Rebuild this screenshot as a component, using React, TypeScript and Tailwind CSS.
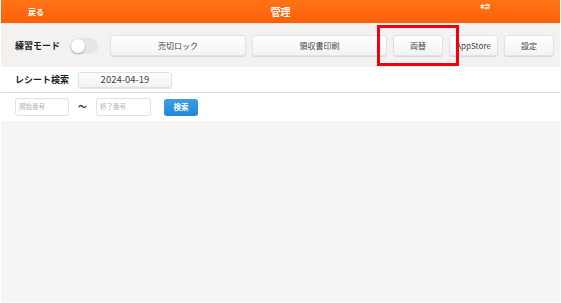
import React from "react";

const font = { fontFamily: '"Noto Sans CJK JP", "Noto Sans", sans-serif' };

function Btn({ w, children }: { w: string; children: React.ReactNode }) {
  return (
    <div
      className={`${w} h-[21px] flex items-center justify-center rounded-[3px] bg-gradient-to-b from-white to-[#f3f3f3] border border-[#e2e2e2] shadow-[0_1px_1px_rgba(0,0,0,0.12)] text-[8px] text-[#444]`}
    >
      {children}
    </div>
  );
}

export default function App() {
  return (
    <div className="w-[561px] h-[303px] bg-[#f6f5f3] relative overflow-hidden border-l border-r border-b border-l-white border-r-[#fbfbfa] border-b-[#fbfbfa]" style={font}>
      {/* header */}
      <div className="h-[24px] bg-gradient-to-b from-[#ff7416] to-[#ff5e08] flex items-center relative border-b border-[#e9e7e4] -mx-px">
        <div className="pl-[28px] text-[8px] font-bold text-white">戻る</div>
        <div className="absolute left-0 right-0 top-0 h-[23px] flex items-center justify-center text-[10px] font-bold text-white">
          管理
        </div>
        <div className="absolute left-[480px] top-[2px] text-[5px] font-bold text-white">本部</div>
      </div>
      {/* toolbar */}
      <div className="h-[43px] bg-[#f3f2f0] flex items-center pl-[14px] pr-[6px]">
        <div className="text-[9px] font-bold text-[#222] w-[56px]">練習モード</div>
        <div className="w-[28px] h-[16px] rounded-full bg-[#e6e6e6] relative mr-[12px]">
          <div className="absolute left-[1px] top-[1px] w-[14px] h-[14px] rounded-full bg-white shadow-[0_1px_2px_rgba(0,0,0,0.3)]" />
        </div>
        <div className="flex gap-[6px]">
          <Btn w="w-[136px]">売切ロック</Btn>
          <Btn w="w-[135px]">領収書印刷</Btn>
          <Btn w="w-[50px]">両替</Btn>
          <Btn w="w-[49px]">AppStore</Btn>
          <Btn w="w-[50px]">設定</Btn>
        </div>
      </div>
      {/* receipt search */}
      <div className="bg-white h-[26px] flex items-center pl-[14px] border-b border-[#dcdcdc]">
        <div className="text-[9px] font-bold text-[#222] w-[63px]">レシート検索</div>
        <div className="w-[94px] h-[16px] flex items-center justify-center rounded-[3px] bg-gradient-to-b from-white to-[#f2f2f2] border border-[#e0e0e0] shadow-[0_1px_1px_rgba(0,0,0,0.12)] text-[9.5px] text-[#444]">
          2024-04-19
        </div>
      </div>
      <div className="bg-white h-[28px] flex items-center pl-[14px]">
        <div className="w-[54px] h-[18px] rounded-[3px] border border-[#e2e2e2] bg-white flex items-center pl-[3px] text-[6.5px] text-[#b5b5b5]">
          開始番号
        </div>
        <div className="w-[27px] text-center text-[9px] text-[#333] font-bold">〜</div>
        <div className="w-[55px] h-[18px] rounded-[3px] border border-[#e2e2e2] bg-white flex items-center pl-[3px] text-[6.5px] text-[#b5b5b5]">
          終了番号
        </div>
        <div className="ml-[13px] w-[34px] h-[17px] rounded-[3px] bg-gradient-to-b from-[#3a9fe6] to-[#2486d6] flex items-center justify-center text-[7.5px] font-bold text-white">
          検索
        </div>
      </div>
      {/* annotation */}
      <div className="absolute left-[376px] top-[25px] w-[82px] h-[41px] border-[3px] border-[#f2000f]" />
    </div>
  );
}
